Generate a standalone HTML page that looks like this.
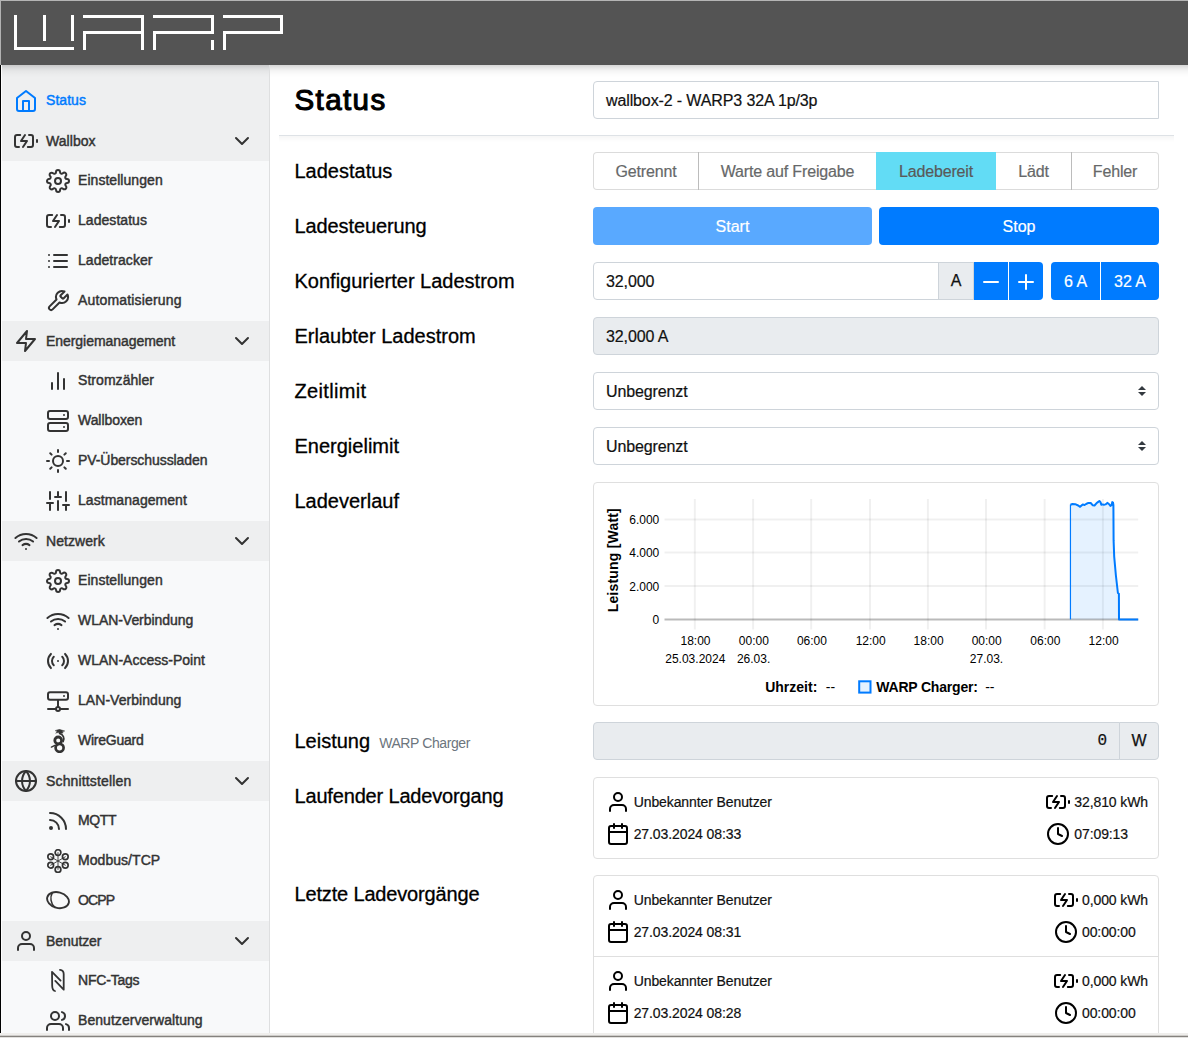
<!DOCTYPE html>
<html lang="de">
<head>
<meta charset="utf-8">
<title>WARP Charger - Status</title>
<style>
*{box-sizing:border-box;}
html,body{margin:0;padding:0;}
body{width:1188px;height:1038px;overflow:hidden;position:relative;background:#fff;
 font-family:"Liberation Sans",sans-serif;font-size:16px;color:#212529;line-height:1.5;}
.ic{display:block;flex:none;}
#frame-top{position:absolute;left:0;top:0;width:1188px;height:1px;background:#b5b5b5;z-index:50;}
#frame-left{position:absolute;left:0;top:0;width:1px;height:1033px;background:linear-gradient(#b2b2b2 0,#b2b2b2 65px,#000 65px);z-index:50;}
#frame-left2{position:absolute;left:1px;top:65px;width:1px;height:968px;background:#fdfdfd;z-index:50;}
#frame-bottom{position:absolute;left:0;top:1033px;width:1188px;height:5px;z-index:50;
 background:linear-gradient(#efeeec 0,#efeeec 2px,#cfcdca 2px,#cfcdca 3px,#85827e 3px,#85827e 4px,#e2e1df 4px);}
#navbar{position:absolute;left:0;top:0;width:1188px;height:65px;background:#545454;z-index:20;
}
#logo{position:absolute;left:0;top:0;}
#sidebar{position:absolute;left:1px;top:65px;width:269px;height:968px;background:#f8f9fa;z-index:5;
 box-shadow:inset -1px 0 0 rgba(0,0,0,.1);padding-top:16px;}
#sidebar:before{content:"";position:absolute;left:0;top:0;width:268px;height:16px;background:rgba(0,0,0,.04);}
#sidebar:after{content:"";position:absolute;left:0;top:0;width:268px;height:12px;background:linear-gradient(rgba(0,0,0,.16),rgba(0,0,0,.09) 3px,rgba(0,0,0,.04) 6px,rgba(0,0,0,.015) 9px,rgba(0,0,0,0) 13px);}
.nav-row{height:40px;display:flex;align-items:center;font-size:14px;color:#333;position:relative;
 -webkit-text-stroke:.45px currentColor;}
.nav-row.top{padding-left:13px;background:rgba(0,0,0,.04);margin-right:1px;}
.nav-row.sub{padding-left:45px;}
.nav-row .lbl{margin-left:8px;position:relative;top:-1px;letter-spacing:.05px;}
.nav-row.active{color:#007bff;}
.nav-row.top .lbl{top:0;}
.nav-row.active .lbl{top:-1px;}
.nav-row .chev{position:absolute;left:229px;top:8px;}
#main{position:absolute;left:270px;top:65px;width:918px;height:968px;z-index:21;background:#fff;}
#main:before{content:"";position:absolute;left:0;top:0;width:918px;height:12px;background:linear-gradient(rgba(0,0,0,.16),rgba(0,0,0,.09) 3px,rgba(0,0,0,.04) 6px,rgba(0,0,0,.015) 9px,rgba(0,0,0,0) 13px);}
#hr:after{content:"";position:absolute;left:0;top:1px;width:895px;height:6px;background:linear-gradient(rgba(0,0,0,.035),rgba(0,0,0,0));}
h1{position:absolute;left:24.500px;top:11px;margin:0;font-size:29.500px;font-weight:400;line-height:48px;color:#000;letter-spacing:1.400px;-webkit-text-stroke:1.1px #000;}
#hr{position:absolute;left:9px;top:70px;width:895px;height:1px;background:#dee2e6;}
.fc{position:absolute;left:323px;width:566px;height:38px;border:1px solid #ced4da;border-radius:4px;background:#fff;
 padding:0 12px;line-height:37.5px;font-size:16px;color:#111;white-space:nowrap;-webkit-text-stroke:.2px;letter-spacing:-.12px;}
.lab{position:absolute;left:24.5px;font-size:20px;line-height:30px;color:#000;-webkit-text-stroke:.3px #000;white-space:nowrap;letter-spacing:0;}
.lab small{font-size:14px;color:#6c757d;margin-left:9px;letter-spacing:-.4px;-webkit-text-stroke:0;}
.ro{background:#e9ecef;}
.btn{position:absolute;height:38px;line-height:39.6px;-webkit-text-stroke:.2px;text-align:center;font-size:16px;color:#fff;background:#007bff;white-space:nowrap;}

.bg{position:absolute;left:323px;width:566px;height:38px;}
.bgi{position:absolute;top:0;height:38px;line-height:37px;text-align:center;font-size:16px;color:#666869;border:1px solid rgba(0,0,0,.14);background:#fff;background-clip:padding-box;white-space:nowrap;letter-spacing:-.15px;-webkit-text-stroke:.2px;}
.bgi.act{background:#62dcf5;color:#595959;border-color:#62dcf5;}
.btn.dis{background:#59a9ff;}
.btn .ic{margin:8px auto 0;}
.addon{position:absolute;height:38px;line-height:36px;text-align:center;border:1px solid #ced4da;background:#e9ecef;color:#111;font-size:16px;-webkit-text-stroke:.25px;}
.ar{position:absolute;right:12px;top:13px;width:8px;height:10px;}
.ar:before,.ar:after{content:"";position:absolute;left:0;border:4px solid transparent;}
.ar:before{top:-4px;border-bottom-color:#343a40;}
.ar:after{top:6px;border-top-color:#343a40;}
.mono{font-family:"Liberation Mono",monospace;}
#chartbox{position:absolute;left:323px;top:417px;width:566px;height:224px;border:1px solid #dfdfdf;border-radius:4px;background:#fff;}
#chart{display:block;}
.card{position:absolute;left:323px;width:566px;border:1px solid #dfdfdf;border-radius:4px;background:#fff;font-size:14px;color:#212529;}
.charge{height:80px;position:relative;}
.charge + .charge{border-top:1px solid #dfdfdf;height:81px;}
.cl{position:absolute;left:11.700px;top:12px;}
.cr{position:absolute;right:10px;top:12px;}
.crow{display:flex;align-items:center;height:24px;margin-bottom:8px;white-space:nowrap;color:#212529;}
.crow .ic{color:#000;}
.crow span{margin-left:4px;position:relative;top:.5px;-webkit-text-stroke:.2px;color:#111;}
.cr .crow span{letter-spacing:-.1px;}
.cl .crow span{letter-spacing:-.1px;}
</style>
</head>
<body>
<div id="frame-top"></div><div id="frame-left"></div><div id="frame-left2"></div><div id="frame-bottom"></div>
<div id="navbar">
<svg id="logo" width="300" height="65" viewBox="0 0 300 65" role="img" aria-label="WARP"><title>WARP</title>
<g fill="#fff">
<rect x="14" y="15" width="3" height="35"/><rect x="14" y="47" width="60" height="3"/><rect x="43" y="15" width="3" height="26"/><rect x="71" y="15" width="3" height="26"/>
<rect x="83" y="15" width="61" height="3"/><rect x="141" y="15" width="3" height="35"/><rect x="83" y="31" width="58" height="3"/><rect x="83" y="31" width="3" height="19"/>
<rect x="153" y="15" width="61" height="3"/><rect x="211" y="15" width="3" height="19"/><rect x="153" y="31" width="61" height="3"/><rect x="153" y="31" width="3" height="19"/><rect x="211" y="40" width="3" height="10"/>
<rect x="223" y="15" width="60" height="3"/><rect x="280" y="15" width="3" height="19"/><rect x="223" y="31" width="60" height="3"/><rect x="223" y="31" width="3" height="19"/>
</g></svg>
</div>
<div id="sidebar">
<div class="nav-row top active"><svg class="ic " width="24" height="24" viewBox="0 0 24 24" fill="none" stroke="currentColor" stroke-width="2" stroke-linecap="round" stroke-linejoin="round"><path d="M3 9l9-7 9 7v11a2 2 0 0 1-2 2H5a2 2 0 0 1-2-2z"/><polyline points="9 22 9 12 15 12 15 22"/></svg><span class="lbl">Status</span></div>
<div class="nav-row top"><svg class="ic " width="24" height="24" viewBox="0 0 24 24" fill="none" stroke="currentColor" stroke-width="2" stroke-linecap="round" stroke-linejoin="round"><path d="M5 18H3a2 2 0 0 1-2-2V8a2 2 0 0 1 2-2h3.19M15 6h2a2 2 0 0 1 2 2v8a2 2 0 0 1-2 2h-3.19"/><line x1="23" y1="13" x2="23" y2="11"/><polyline points="11 6 7 12 13 12 9 18"/></svg><span class="lbl">Wallbox</span><svg class="ic chev" width="24" height="24" viewBox="0 0 24 24" fill="none" stroke="currentColor" stroke-width="2" stroke-linecap="round" stroke-linejoin="round"><polyline points="6 9 12 15 18 9"/></svg></div>
<div class="nav-row sub"><svg class="ic " width="24" height="24" viewBox="0 0 24 24" fill="none" stroke="currentColor" stroke-width="2" stroke-linecap="round" stroke-linejoin="round"><circle cx="12" cy="12" r="3"/><path d="M19.4 15a1.65 1.65 0 0 0 .33 1.82l.06.06a2 2 0 0 1 0 2.83 2 2 0 0 1-2.83 0l-.06-.06a1.65 1.65 0 0 0-1.82-.33 1.65 1.65 0 0 0-1 1.51V21a2 2 0 0 1-2 2 2 2 0 0 1-2-2v-.09A1.65 1.65 0 0 0 9 19.4a1.65 1.65 0 0 0-1.82.33l-.06.06a2 2 0 0 1-2.83 0 2 2 0 0 1 0-2.83l.06-.06a1.65 1.65 0 0 0 .33-1.82 1.65 1.65 0 0 0-1.51-1H3a2 2 0 0 1-2-2 2 2 0 0 1 2-2h.09A1.65 1.65 0 0 0 4.6 9a1.65 1.65 0 0 0-.33-1.82l-.06-.06a2 2 0 0 1 0-2.83 2 2 0 0 1 2.83 0l.06.06a1.65 1.65 0 0 0 1.82.33H9a1.65 1.65 0 0 0 1-1.51V3a2 2 0 0 1 2-2 2 2 0 0 1 2 2v.09a1.65 1.65 0 0 0 1 1.51 1.65 1.65 0 0 0 1.82-.33l.06-.06a2 2 0 0 1 2.83 0 2 2 0 0 1 0 2.830l-.06.06a1.65 1.65 0 0 0-.33 1.82V9a1.65 1.65 0 0 0 1.51 1H21a2 2 0 0 1 2 2 2 2 0 0 1-2 2h-.09a1.65 1.65 0 0 0-1.51 1z"/></svg><span class="lbl">Einstellungen</span></div>
<div class="nav-row sub"><svg class="ic " width="24" height="24" viewBox="0 0 24 24" fill="none" stroke="currentColor" stroke-width="2" stroke-linecap="round" stroke-linejoin="round"><path d="M5 18H3a2 2 0 0 1-2-2V8a2 2 0 0 1 2-2h3.19M15 6h2a2 2 0 0 1 2 2v8a2 2 0 0 1-2 2h-3.19"/><line x1="23" y1="13" x2="23" y2="11"/><polyline points="11 6 7 12 13 12 9 18"/></svg><span class="lbl">Ladestatus</span></div>
<div class="nav-row sub"><svg class="ic " width="24" height="24" viewBox="0 0 24 24" fill="none" stroke="currentColor" stroke-width="2" stroke-linecap="round" stroke-linejoin="round"><line x1="8" y1="6" x2="21" y2="6"/><line x1="8" y1="12" x2="21" y2="12"/><line x1="8" y1="18" x2="21" y2="18"/><line x1="3" y1="6" x2="3.01" y2="6"/><line x1="3" y1="12" x2="3.01" y2="12"/><line x1="3" y1="18" x2="3.01" y2="18"/></svg><span class="lbl">Ladetracker</span></div>
<div class="nav-row sub"><svg class="ic " width="24" height="24" viewBox="0 0 24 24" fill="none" stroke="currentColor" stroke-width="2" stroke-linecap="round" stroke-linejoin="round"><path d="M14.7 6.3a1 1 0 0 0 0 1.4l1.6 1.6a1 1 0 0 0 1.4 0l3.77-3.77a6 6 0 0 1-7.94 7.94l-6.91 6.91a2.12 2.12 0 0 1-3-3l6.91-6.91a6 6 0 0 1 7.94-7.94l-3.76 3.76z"/></svg><span class="lbl" style="letter-spacing:0.17px">Automatisierung</span></div>
<div class="nav-row top"><svg class="ic " width="24" height="24" viewBox="0 0 24 24" fill="none" stroke="currentColor" stroke-width="2" stroke-linecap="round" stroke-linejoin="round"><polygon points="13 2 3 14 12 14 11 22 21 10 12 10 13 2"/></svg><span class="lbl" style="letter-spacing:-0.05px">Energiemanagement</span><svg class="ic chev" width="24" height="24" viewBox="0 0 24 24" fill="none" stroke="currentColor" stroke-width="2" stroke-linecap="round" stroke-linejoin="round"><polyline points="6 9 12 15 18 9"/></svg></div>
<div class="nav-row sub"><svg class="ic " width="24" height="24" viewBox="0 0 24 24" fill="none" stroke="currentColor" stroke-width="2" stroke-linecap="round" stroke-linejoin="round"><line x1="18" y1="20" x2="18" y2="10"/><line x1="12" y1="20" x2="12" y2="4"/><line x1="6" y1="20" x2="6" y2="14"/></svg><span class="lbl">Stromzähler</span></div>
<div class="nav-row sub"><svg class="ic " width="24" height="24" viewBox="0 0 24 24" fill="none" stroke="currentColor" stroke-width="2" stroke-linecap="round" stroke-linejoin="round"><rect x="2" y="2" width="20" height="8" rx="2" ry="2"/><rect x="2" y="14" width="20" height="8" rx="2" ry="2"/><line x1="18" y1="6" x2="18.01" y2="6"/><line x1="18" y1="18" x2="18.01" y2="18"/></svg><span class="lbl" style="letter-spacing:-0.06px">Wallboxen</span></div>
<div class="nav-row sub"><svg class="ic " width="24" height="24" viewBox="0 0 24 24" fill="none" stroke="currentColor" stroke-width="2" stroke-linecap="round" stroke-linejoin="round"><circle cx="12" cy="12" r="5"/><line x1="12" y1="1" x2="12" y2="3"/><line x1="12" y1="21" x2="12" y2="23"/><line x1="4.22" y1="4.22" x2="5.64" y2="5.64"/><line x1="18.36" y1="18.36" x2="19.78" y2="19.78"/><line x1="1" y1="12" x2="3" y2="12"/><line x1="21" y1="12" x2="23" y2="12"/><line x1="4.22" y1="19.78" x2="5.64" y2="18.36"/><line x1="18.36" y1="5.64" x2="19.78" y2="4.22"/></svg><span class="lbl" style="letter-spacing:-0.07px">PV-Überschussladen</span></div>
<div class="nav-row sub"><svg class="ic " width="24" height="24" viewBox="0 0 24 24" fill="none" stroke="currentColor" stroke-width="2" stroke-linecap="round" stroke-linejoin="round"><line x1="4" y1="21" x2="4" y2="14"/><line x1="4" y1="10" x2="4" y2="3"/><line x1="12" y1="21" x2="12" y2="12"/><line x1="12" y1="8" x2="12" y2="3"/><line x1="20" y1="21" x2="20" y2="16"/><line x1="20" y1="12" x2="20" y2="3"/><line x1="1" y1="14" x2="7" y2="14"/><line x1="9" y1="8" x2="15" y2="8"/><line x1="17" y1="16" x2="23" y2="16"/></svg><span class="lbl">Lastmanagement</span></div>
<div class="nav-row top"><svg class="ic " width="24" height="24" viewBox="0 0 24 24" fill="none" stroke="currentColor" stroke-width="2" stroke-linecap="round" stroke-linejoin="round"><path d="M5 12.55a11 11 0 0 1 14.08 0"/><path d="M1.42 9a16 16 0 0 1 21.16 0"/><path d="M8.53 16.11a6 6 0 0 1 6.95 0"/><line x1="12" y1="20" x2="12.01" y2="20"/></svg><span class="lbl">Netzwerk</span><svg class="ic chev" width="24" height="24" viewBox="0 0 24 24" fill="none" stroke="currentColor" stroke-width="2" stroke-linecap="round" stroke-linejoin="round"><polyline points="6 9 12 15 18 9"/></svg></div>
<div class="nav-row sub"><svg class="ic " width="24" height="24" viewBox="0 0 24 24" fill="none" stroke="currentColor" stroke-width="2" stroke-linecap="round" stroke-linejoin="round"><circle cx="12" cy="12" r="3"/><path d="M19.4 15a1.65 1.65 0 0 0 .33 1.82l.06.06a2 2 0 0 1 0 2.83 2 2 0 0 1-2.83 0l-.06-.06a1.65 1.65 0 0 0-1.82-.33 1.65 1.65 0 0 0-1 1.51V21a2 2 0 0 1-2 2 2 2 0 0 1-2-2v-.09A1.65 1.65 0 0 0 9 19.4a1.65 1.65 0 0 0-1.82.33l-.06.06a2 2 0 0 1-2.83 0 2 2 0 0 1 0-2.83l.06-.06a1.65 1.65 0 0 0 .33-1.82 1.65 1.65 0 0 0-1.51-1H3a2 2 0 0 1-2-2 2 2 0 0 1 2-2h.09A1.65 1.65 0 0 0 4.6 9a1.65 1.65 0 0 0-.33-1.82l-.06-.06a2 2 0 0 1 0-2.83 2 2 0 0 1 2.83 0l.06.06a1.65 1.65 0 0 0 1.82.33H9a1.65 1.65 0 0 0 1-1.51V3a2 2 0 0 1 2-2 2 2 0 0 1 2 2v.09a1.65 1.65 0 0 0 1 1.51 1.65 1.65 0 0 0 1.82-.33l.06-.06a2 2 0 0 1 2.83 0 2 2 0 0 1 0 2.830l-.06.06a1.65 1.65 0 0 0-.33 1.82V9a1.65 1.65 0 0 0 1.51 1H21a2 2 0 0 1 2 2 2 2 0 0 1-2 2h-.09a1.65 1.65 0 0 0-1.51 1z"/></svg><span class="lbl">Einstellungen</span></div>
<div class="nav-row sub"><svg class="ic " width="24" height="24" viewBox="0 0 24 24" fill="none" stroke="currentColor" stroke-width="2" stroke-linecap="round" stroke-linejoin="round"><path d="M5 12.55a11 11 0 0 1 14.08 0"/><path d="M1.42 9a16 16 0 0 1 21.16 0"/><path d="M8.53 16.11a6 6 0 0 1 6.95 0"/><line x1="12" y1="20" x2="12.01" y2="20"/></svg><span class="lbl" style="letter-spacing:-0.05px">WLAN-Verbindung</span></div>
<div class="nav-row sub"><svg class="ic " width="24" height="24" viewBox="0 0 24 24" fill="none" stroke="currentColor" stroke-width="2" stroke-linecap="round" stroke-linejoin="round"><line x1="12" y1="12" x2="12.01" y2="12"/><path d="M16.24 7.76a6 6 0 0 1 0 8.49m-8.48-.01a6 6 0 0 1 0-8.49m11.31-2.82a10 10 0 0 1 0 14.14m-14.14 0a10 10 0 0 1 0-14.14"/></svg><span class="lbl" style="letter-spacing:0px">WLAN-Access-Point</span></div>
<div class="nav-row sub"><svg class="ic " width="24" height="24" viewBox="0 0 24 24" fill="none" stroke="currentColor" stroke-width="2" stroke-linecap="round" stroke-linejoin="round"><rect x="2" y="3.3" width="20" height="7.5" rx="2" ry="2"/><line x1="18" y1="7" x2="18.01" y2="7"/><line x1="12" y1="11" x2="12" y2="18"/><circle cx="12" cy="20" r="2"/><line x1="2" y1="20" x2="10" y2="20"/><line x1="14" y1="20" x2="22" y2="20"/></svg><span class="lbl">LAN-Verbindung</span></div>
<div class="nav-row sub"><svg class="ic " width="24" height="24" viewBox="0 0 24 24" fill="none" stroke="currentColor" stroke-width="2" stroke-linecap="round" stroke-linejoin="round"><circle cx="13.600" cy="18.800" r="4" stroke-width="2.700"/><circle cx="12.200" cy="11.400" r="3.400" stroke-width="2.800"/><path d="M17.200 12.500C18.900 8.800 17.200 5.600 13.600 4.500" stroke-width="1.700"/><path d="M13.300.300l5.500 1.700-2.600.7 1 1.200-2.400.5-2.600-.9-2.600.700 1.700-1.500-1.900-.9z" fill="currentColor" stroke-width=".4"/><path d="M5.400 18.100l3.400-1.700" stroke-width="1.400"/></svg><span class="lbl" style="letter-spacing:-0.25px">WireGuard</span></div>
<div class="nav-row top"><svg class="ic " width="24" height="24" viewBox="0 0 24 24" fill="none" stroke="currentColor" stroke-width="2" stroke-linecap="round" stroke-linejoin="round"><circle cx="12" cy="12" r="10"/><line x1="2" y1="12" x2="22" y2="12"/><path d="M12 2a15.3 15.3 0 0 1 4 10 15.3 15.3 0 0 1-4 10 15.3 15.3 0 0 1-4-10 15.3 15.3 0 0 1 4-10z"/></svg><span class="lbl" style="letter-spacing:0.15px">Schnittstellen</span><svg class="ic chev" width="24" height="24" viewBox="0 0 24 24" fill="none" stroke="currentColor" stroke-width="2" stroke-linecap="round" stroke-linejoin="round"><polyline points="6 9 12 15 18 9"/></svg></div>
<div class="nav-row sub"><svg class="ic " width="24" height="24" viewBox="0 0 24 24" fill="none" stroke="currentColor" stroke-width="2" stroke-linecap="round" stroke-linejoin="round"><path d="M4 11a9 9 0 0 1 9 9"/><path d="M4 4a16 16 0 0 1 16 16"/><circle cx="5" cy="19" r="1"/></svg><span class="lbl" style="letter-spacing:-0.35px">MQTT</span></div>
<div class="nav-row sub"><svg class="ic " width="24" height="24" viewBox="0 0 24 24" fill="none" stroke="currentColor" stroke-width="2" stroke-linecap="round" stroke-linejoin="round"><g stroke-width="1.700"><circle cx="12" cy="3.600" r="2.850"/><circle cx="12" cy="20.400" r="2.850"/><circle cx="19.300" cy="7.800" r="2.850"/><circle cx="4.700" cy="7.800" r="2.850"/><circle cx="19.300" cy="16.200" r="2.850"/><circle cx="4.700" cy="16.200" r="2.850"/></g><path d="M12 3.600v16.800M4.700 7.800l14.600 8.400M19.300 7.800L4.700 16.200" stroke-width=".9"/></svg><span class="lbl">Modbus/TCP</span></div>
<div class="nav-row sub"><svg class="ic " width="24" height="24" viewBox="0 0 24 24" fill="none" stroke="currentColor" stroke-width="2" stroke-linecap="round" stroke-linejoin="round"><g stroke-width="1.900"><ellipse cx="12" cy="11.100" rx="11.100" ry="7.800" transform="rotate(15 12 11.100)"/><path d="M6.300 3.800C3.900 8 4.400 14.500 8.800 18.400" stroke-width="1.500"/></g></svg><span class="lbl" style="letter-spacing:-0.9px">OCPP</span></div>
<div class="nav-row top"><svg class="ic " width="24" height="24" viewBox="0 0 24 24" fill="none" stroke="currentColor" stroke-width="2" stroke-linecap="round" stroke-linejoin="round"><path d="M20 21v-2a4 4 0 0 0-4-4H8a4 4 0 0 0-4 4v2"/><circle cx="12" cy="7" r="4"/></svg><span class="lbl" style="letter-spacing:-0.08px">Benutzer</span><svg class="ic chev" width="24" height="24" viewBox="0 0 24 24" fill="none" stroke="currentColor" stroke-width="2" stroke-linecap="round" stroke-linejoin="round"><polyline points="6 9 12 15 18 9"/></svg></div>
<div class="nav-row sub"><svg class="ic " width="24" height="24" viewBox="0 0 24 24" fill="none" stroke="currentColor" stroke-width="2" stroke-linecap="round" stroke-linejoin="round"><g stroke-width="1.8"><path d="M9 22C7 21.500 6.300 20 6.200 17L6 2.800l8.600 8.800"/><path d="M14 .900c2.500.300 3.700 1.600 3.700 4.100v15.700L9.300 11.900"/></g></svg><span class="lbl" style="letter-spacing:-0.2px">NFC-Tags</span></div>
<div class="nav-row sub"><svg class="ic " width="24" height="24" viewBox="0 0 24 24" fill="none" stroke="currentColor" stroke-width="2" stroke-linecap="round" stroke-linejoin="round"><path d="M17 21v-2a4 4 0 0 0-4-4H5a4 4 0 0 0-4 4v2"/><circle cx="9" cy="7" r="4"/><path d="M23 21v-2a4 4 0 0 0-3-3.870"/><path d="M16 3.13a4 4 0 0 1 0 7.75"/></svg><span class="lbl">Benutzerverwaltung</span></div>
</div>
<div id="main">
<h1>Status</h1>
<div class="fc" style="top:16px;border-radius:4px 0 0 4px;">wallbox-2 - WARP3 32A 1p/3p</div>
<div id="hr"></div>

<div class="lab" style="top:91px;">Ladestatus</div>
<div class="lab" style="top:146px;letter-spacing:-.1px;">Ladesteuerung</div>
<div class="lab" style="top:201px;">Konfigurierter Ladestrom</div>
<div class="lab" style="top:256px;">Erlaubter Ladestrom</div>
<div class="lab" style="top:311px;letter-spacing:.33px;">Zeitlimit</div>
<div class="lab" style="top:366px;">Energielimit</div>
<div class="lab" style="top:421px;">Ladeverlauf</div>
<div class="lab" style="top:661px;">Leistung<small>WARP Charger</small></div>
<div class="lab" style="top:716px;letter-spacing:-.17px;">Laufender Ladevorgang</div>
<div class="lab" style="top:814px;letter-spacing:-.16px;">Letzte Ladevorgänge</div>

<div class="bg" style="top:87px;">
<div class="bgi" style="left:0;width:106px;border-radius:4px 0 0 4px;">Getrennt</div><div class="bgi" style="left:105px;width:179px;">Warte auf Freigabe</div><div class="bgi" style="left:402px;width:77px;">Lädt</div><div class="bgi" style="left:478px;width:88px;border-radius:0 4px 4px 0;">Fehler</div><div class="bgi act" style="left:283px;width:120px;">Ladebereit</div>
</div>

<div class="btn dis" style="left:323px;top:142px;width:279px;border-radius:4px;">Start</div>
<div class="btn" style="left:609px;top:142px;width:280px;border-radius:4px;">Stop</div>

<div class="fc" style="top:197px;width:346px;border-radius:4px 0 0 4px;">32,000</div>
<div class="addon" style="left:668px;top:197px;width:36px;">A</div>
<div class="btn" style="left:704px;top:197px;width:34px;"><svg class="ic " width="24" height="24" viewBox="0 0 24 24" fill="none" stroke="currentColor" stroke-width="2" stroke-linecap="round" stroke-linejoin="round"><line x1="5" y1="12" x2="19" y2="12"/></svg></div>
<div class="btn" style="left:739px;top:197px;width:34px;border-radius:0 4px 4px 0;"><svg class="ic " width="24" height="24" viewBox="0 0 24 24" fill="none" stroke="currentColor" stroke-width="2" stroke-linecap="round" stroke-linejoin="round"><line x1="12" y1="5" x2="12" y2="19"/><line x1="5" y1="12" x2="19" y2="12"/></svg></div>
<div class="btn" style="left:781px;top:197px;width:49px;border-radius:4px 0 0 4px;">6 A</div>
<div class="btn" style="left:831px;top:197px;width:58px;border-radius:0 4px 4px 0;">32 A</div>

<div class="fc ro" style="top:252px;">32,000 A</div>
<div class="fc sel" style="top:307px;">Unbegrenzt<i class="ar"></i></div>
<div class="fc sel" style="top:362px;">Unbegrenzt<i class="ar"></i></div>

<div id="chartbox">
<svg id="chart" width="564" height="222" viewBox="0 0 564 222" font-family="Liberation Sans, sans-serif" font-size="12" fill="#000">
<g stroke="#000" stroke-opacity=".06" stroke-width="2"><line x1="100.8" y1="16" x2="100.8" y2="146.5"/><line x1="159.1" y1="16" x2="159.1" y2="146.5"/><line x1="217.2" y1="16" x2="217.2" y2="146.5"/><line x1="276" y1="16" x2="276" y2="146.5"/><line x1="333.9" y1="16" x2="333.9" y2="146.5"/><line x1="392" y1="16" x2="392" y2="146.5"/><line x1="450.6" y1="16" x2="450.6" y2="146.5"/><line x1="508.9" y1="16" x2="508.9" y2="146.5"/><line x1="70.5" y1="36.5" x2="544.2" y2="36.5"/><line x1="70.5" y1="69.6" x2="544.2" y2="69.6"/><line x1="70.5" y1="102.9" x2="544.2" y2="102.9"/></g>
<path d="M476.5 136.4 L476.5 21.8 L478.5 21.0 L481.2 21.2 L484.2 22.5 L486.1 23.8 L488.7 21.4 L490.6 22 L492.1 21 L494.4 19.9 L496.7 20 L498.6 22.2 L500.5 22.5 L502.4 20.3 L503.9 19.1 L505.4 18 L506.5 19.1 L507.3 21.8 L508.4 21.4 L509.9 21.8 L511.5 21.4 L513.3 19.9 L514.9 21 L516.4 22.9 L517.5 22.2 L518.3 19.1 L519 19.5 L519.4 22.2 L519.6 57.4 L520.2 73.6 L521.9 92.5 L523.9 110 L524.9 110.7 L525 136.4 L544.2 136.4 L544.2 136.4 L476.5 136.4 Z" fill="rgba(0,123,255,.1)" stroke="none"/>
<line x1="70.5" y1="136.4" x2="544.2" y2="136.4" stroke="#000" stroke-opacity=".27" stroke-width="2"/>
<path d="M476.5 21.8 L478.5 21.0 L481.2 21.2 L484.2 22.5 L486.1 23.8 L488.7 21.4 L490.6 22 L492.1 21 L494.4 19.9 L496.7 20 L498.6 22.2 L500.5 22.5 L502.4 20.3 L503.9 19.1 L505.4 18 L506.5 19.1 L507.3 21.8 L508.4 21.4 L509.9 21.8 L511.5 21.4 L513.3 19.9 L514.9 21 L516.4 22.9 L517.5 22.2 L518.3 19.1 L519 19.5 L519.4 22.2 L519.6 57.4 L520.2 73.6 L521.9 92.5 L523.9 110 L524.9 110.7 L525 136.4 L544.2 136.4" fill="none" stroke="#007bff" stroke-width="2" stroke-linejoin="round"/>
<line x1="476.45" y1="136.4" x2="476.45" y2="21.5" stroke="#007bff" stroke-width="1.2"/>
<text x="65.3" y="41.3" text-anchor="end">6.000</text>
<text x="65.3" y="74.4" text-anchor="end">4.000</text>
<text x="65.3" y="107.7" text-anchor="end">2.000</text>
<text x="65.3" y="141.3" text-anchor="end">0</text>
<text x="101.5" y="162.2" text-anchor="middle">18:00</text>
<text x="159.8" y="162.2" text-anchor="middle">00:00</text>
<text x="217.9" y="162.2" text-anchor="middle">06:00</text>
<text x="276.7" y="162.2" text-anchor="middle">12:00</text>
<text x="334.6" y="162.2" text-anchor="middle">18:00</text>
<text x="392.7" y="162.2" text-anchor="middle">00:00</text>
<text x="451.3" y="162.2" text-anchor="middle">06:00</text>
<text x="509.6" y="162.2" text-anchor="middle">12:00</text>
<text x="101.3" y="179.7" text-anchor="middle">25.03.2024</text>
<text x="159.6" y="179.7" text-anchor="middle">26.03.</text>
<text x="392.5" y="179.7" text-anchor="middle">27.03.</text>
<text transform="translate(24.2 77.2) rotate(-90)" text-anchor="middle" font-weight="bold" font-size="14" letter-spacing=".2">Leistung [Watt]</text>
<text x="171.2" y="209" font-weight="bold" font-size="14">Uhrzeit:</text>
<text x="231.8" y="209" font-size="14">--</text>
<rect x="265.2" y="198.3" width="11.3" height="11.3" fill="rgba(0,123,255,.1)" stroke="#007bff" stroke-width="2"/>
<text x="282.3" y="209" font-weight="bold" font-size="14" letter-spacing="-.2">WARP Charger:</text>
<text x="391.2" y="209" font-size="14">--</text>
</svg>
</div>

<div class="fc ro mono" style="top:657px;width:527px;border-radius:4px 0 0 4px;text-align:right;">0</div>
<div class="addon" style="left:849px;top:657px;width:40px;border-radius:0 4px 4px 0;">W</div>

<div class="card" style="top:712px;">
<div class="charge ">
<div class="cl"><div class="crow"><svg class="ic " width="24" height="24" viewBox="0 0 24 24" fill="none" stroke="currentColor" stroke-width="2" stroke-linecap="round" stroke-linejoin="round"><path d="M20 21v-2a4 4 0 0 0-4-4H8a4 4 0 0 0-4 4v2"/><circle cx="12" cy="7" r="4"/></svg><span>Unbekannter Benutzer</span></div><div class="crow"><svg class="ic " width="24" height="24" viewBox="0 0 24 24" fill="none" stroke="currentColor" stroke-width="2" stroke-linecap="round" stroke-linejoin="round"><rect x="3" y="4" width="18" height="18" rx="2" ry="2"/><line x1="16" y1="2" x2="16" y2="6"/><line x1="8" y1="2" x2="8" y2="6"/><line x1="3" y1="10" x2="21" y2="10"/></svg><span>27.03.2024 08:33</span></div></div>
<div class="cr"><div class="crow"><svg class="ic " width="24" height="24" viewBox="0 0 24 24" fill="none" stroke="currentColor" stroke-width="2" stroke-linecap="round" stroke-linejoin="round"><path d="M5 18H3a2 2 0 0 1-2-2V8a2 2 0 0 1 2-2h3.19M15 6h2a2 2 0 0 1 2 2v8a2 2 0 0 1-2 2h-3.19"/><line x1="23" y1="13" x2="23" y2="11"/><polyline points="11 6 7 12 13 12 9 18"/></svg><span>32,810 kWh</span></div><div class="crow"><svg class="ic " width="24" height="24" viewBox="0 0 24 24" fill="none" stroke="currentColor" stroke-width="2" stroke-linecap="round" stroke-linejoin="round"><circle cx="12" cy="12" r="10"/><polyline points="12 6 12 12 16 14"/></svg><span>07:09:13</span></div></div>
</div>
</div>
<div class="card" style="top:810px;height:170px;border-radius:4px 4px 0 0;">
<div class="charge ">
<div class="cl"><div class="crow"><svg class="ic " width="24" height="24" viewBox="0 0 24 24" fill="none" stroke="currentColor" stroke-width="2" stroke-linecap="round" stroke-linejoin="round"><path d="M20 21v-2a4 4 0 0 0-4-4H8a4 4 0 0 0-4 4v2"/><circle cx="12" cy="7" r="4"/></svg><span>Unbekannter Benutzer</span></div><div class="crow"><svg class="ic " width="24" height="24" viewBox="0 0 24 24" fill="none" stroke="currentColor" stroke-width="2" stroke-linecap="round" stroke-linejoin="round"><rect x="3" y="4" width="18" height="18" rx="2" ry="2"/><line x1="16" y1="2" x2="16" y2="6"/><line x1="8" y1="2" x2="8" y2="6"/><line x1="3" y1="10" x2="21" y2="10"/></svg><span>27.03.2024 08:31</span></div></div>
<div class="cr"><div class="crow"><svg class="ic " width="24" height="24" viewBox="0 0 24 24" fill="none" stroke="currentColor" stroke-width="2" stroke-linecap="round" stroke-linejoin="round"><path d="M5 18H3a2 2 0 0 1-2-2V8a2 2 0 0 1 2-2h3.19M15 6h2a2 2 0 0 1 2 2v8a2 2 0 0 1-2 2h-3.19"/><line x1="23" y1="13" x2="23" y2="11"/><polyline points="11 6 7 12 13 12 9 18"/></svg><span>0,000 kWh</span></div><div class="crow"><svg class="ic " width="24" height="24" viewBox="0 0 24 24" fill="none" stroke="currentColor" stroke-width="2" stroke-linecap="round" stroke-linejoin="round"><circle cx="12" cy="12" r="10"/><polyline points="12 6 12 12 16 14"/></svg><span>00:00:00</span></div></div>
</div>
<div class="charge ">
<div class="cl"><div class="crow"><svg class="ic " width="24" height="24" viewBox="0 0 24 24" fill="none" stroke="currentColor" stroke-width="2" stroke-linecap="round" stroke-linejoin="round"><path d="M20 21v-2a4 4 0 0 0-4-4H8a4 4 0 0 0-4 4v2"/><circle cx="12" cy="7" r="4"/></svg><span>Unbekannter Benutzer</span></div><div class="crow"><svg class="ic " width="24" height="24" viewBox="0 0 24 24" fill="none" stroke="currentColor" stroke-width="2" stroke-linecap="round" stroke-linejoin="round"><rect x="3" y="4" width="18" height="18" rx="2" ry="2"/><line x1="16" y1="2" x2="16" y2="6"/><line x1="8" y1="2" x2="8" y2="6"/><line x1="3" y1="10" x2="21" y2="10"/></svg><span>27.03.2024 08:28</span></div></div>
<div class="cr"><div class="crow"><svg class="ic " width="24" height="24" viewBox="0 0 24 24" fill="none" stroke="currentColor" stroke-width="2" stroke-linecap="round" stroke-linejoin="round"><path d="M5 18H3a2 2 0 0 1-2-2V8a2 2 0 0 1 2-2h3.19M15 6h2a2 2 0 0 1 2 2v8a2 2 0 0 1-2 2h-3.19"/><line x1="23" y1="13" x2="23" y2="11"/><polyline points="11 6 7 12 13 12 9 18"/></svg><span>0,000 kWh</span></div><div class="crow"><svg class="ic " width="24" height="24" viewBox="0 0 24 24" fill="none" stroke="currentColor" stroke-width="2" stroke-linecap="round" stroke-linejoin="round"><circle cx="12" cy="12" r="10"/><polyline points="12 6 12 12 16 14"/></svg><span>00:00:00</span></div></div>
</div>
</div>

</div>
</body>
</html>
